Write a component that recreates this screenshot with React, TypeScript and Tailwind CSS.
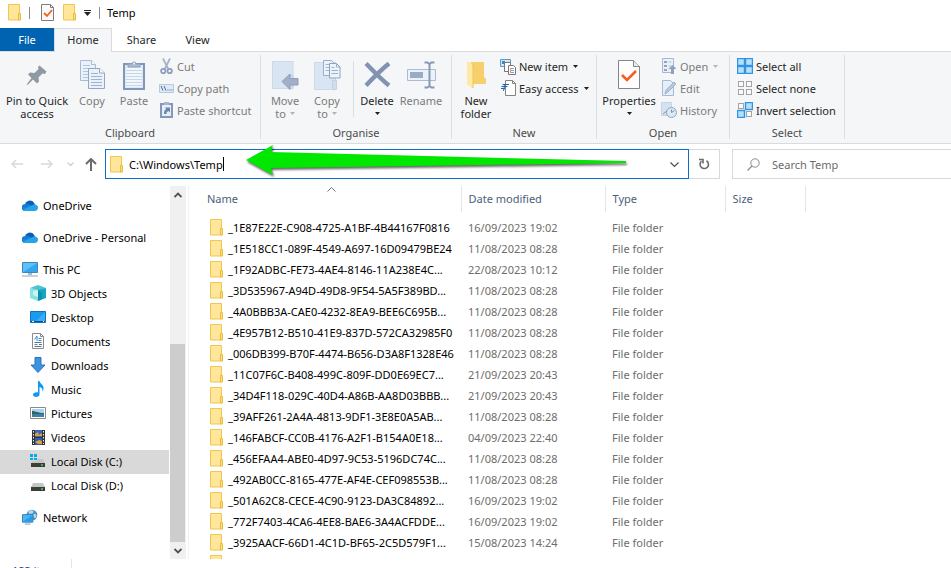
import type { ReactNode } from "react";

const FILES: [string, string][] = [
  ["_1E87E22E-C908-4725-A1BF-4B44167F0816", "16/09/2023 19:02"],
  ["_1E518CC1-089F-4549-A697-16D09479BE24", "11/08/2023 08:28"],
  ["_1F92ADBC-FE73-4AE4-8146-11A238E4C...", "22/08/2023 10:12"],
  ["_3D535967-A94D-49D8-9F54-5A5F389BD...", "11/08/2023 08:28"],
  ["_4A0BBB3A-CAE0-4232-8EA9-BEE6C695B...", "11/08/2023 08:28"],
  ["_4E957B12-B510-41E9-837D-572CA32985F0", "11/08/2023 08:28"],
  ["_006DB399-B70F-4474-B656-D3A8F1328E46", "11/08/2023 08:28"],
  ["_11C07F6C-B408-499C-809F-DD0E69EC7...", "21/09/2023 20:43"],
  ["_34D4F118-029C-40D4-A86B-AA8D03BBB...", "21/09/2023 20:43"],
  ["_39AFF261-2A4A-4813-9DF1-3E8E0A5AB...", "11/08/2023 08:28"],
  ["_146FABCF-CC0B-4176-A2F1-B154A0E18...", "04/09/2023 22:40"],
  ["_456EFAA4-ABE0-4D97-9C53-5196DC74C...", "11/08/2023 08:28"],
  ["_492AB0CC-8165-477E-AF4E-CEF098553B...", "11/08/2023 08:28"],
  ["_501A62C8-CECE-4C90-9123-DA3C84892...", "16/09/2023 19:02"],
  ["_772F7403-4CA6-4EE8-BAE6-3A4ACFDDE...", "16/09/2023 19:02"],
  ["_3925AACF-66D1-4C1D-BF65-2C5D579F1...", "15/08/2023 14:24"],
];

/* ---------- icons ---------- */

function FolderIcon() {
  return (
    <svg width="14" height="17" viewBox="0 0 14 17" className="shrink-0">
      <path d="M.5.5h11v15.500H.5z" fill="#ffe69b" stroke="#eec74e" />
      <path d="M10.500 9.500h2v6.500h-2z" fill="#ffdf83" stroke="#e9bd3c" />
    </svg>
  );
}

function CheckPage({ large }: { large?: boolean }) {
  return (
    <svg width={large ? 22 : 13} height={large ? 29 : 17} viewBox={large ? "0 0 22 29" : "0 0 13 17"} className="shrink-0">
      {large ? (
        <>
          <path d="M.5.5h15l6 6v22H.5z" fill="#fdfdfd" stroke="#858585" />
          <path d="M15.500.5v6h6" fill="#e9e9e9" stroke="#858585" />
          <path d="M4 15l5 5 9-9" fill="none" stroke="#f1601c" strokeWidth="2.600" />
        </>
      ) : (
        <>
          <path d="M.5.5h9l3 3v13H.5z" fill="#fafafa" stroke="#7c7c7c" />
          <path d="M9.500.5v3h3" fill="none" stroke="#7c7c7c" />
          <path d="M3 9l3 3 5-6" fill="none" stroke="#f1601c" strokeWidth="1.800" />
        </>
      )}
    </svg>
  );
}

const Pin = () => (
  <svg width="22" height="22" viewBox="0 0 22 22">
    <path d="M13.500 1.500l7 6-1.500 2.500-2.500-.5-4 4 .5 4-2 2-4-4-5.500 5.500-.7-.7L5.500 14l-3.500-3.500 2-2 4.500.5 4-4-.5-2z" fill="#8f99a3" />
  </svg>
);

function TwoPages() {
  return (
    <svg width="25" height="29" viewBox="0 0 25 29">
      <path d="M.5.5h11l4 4v16H.5z" fill="#eaf1fa" stroke="#a8b9d4" />
      <path d="M11.500.5v4h4" fill="#fff" stroke="#a8b9d4" />
      <path d="M3 5.500h7M3 8.500h10M3 11.500h10M3 14.500h10M3 17.500h10" stroke="#b4c5de" />
      <path d="M8.500 8.500h11l5 4.500v15.500h-16z" fill="#eaf1fa" stroke="#93a6c6" />
      <path d="M19.500 8.500v4.500h5" fill="#fff" stroke="#93a6c6" />
      <path d="M11 13.500h7M11 16.500h11M11 19.500h11M11 22.500h11M11 25.500h11" stroke="#9fb3d0" />
    </svg>
  );
}

const PasteIcon = () => (
  <svg width="22" height="30" viewBox="0 0 22 30">
    <path d="M1 4h20v25H1z" fill="#dbe8f7" stroke="#8296b8" strokeWidth="2" />
    <path d="M3 8h16v19H3z" fill="#f3f7fc" />
    <path d="M3 10.500h16M3 13.500h16M3 16.500h16M3 19.500h16M3 22.500h16M3 25.500h16" stroke="#c6d6ea" />
    <path d="M5 7V4h4a2 2 0 014 0h4v3z" fill="#a9bad3" stroke="#8da0be" />
    <circle cx="11" cy="3.500" r="1" fill="#eef3f9" />
  </svg>
);

const CutIcon = () => (
  <svg width="13" height="17" viewBox="0 0 13 17">
    <path d="M3 .5l5.500 11M10 .5L4.500 11.500" stroke="#a5b3c8" strokeWidth="1.800" />
    <circle cx="3.300" cy="13" r="2.200" fill="none" stroke="#8d9fbd" strokeWidth="1.800" />
    <circle cx="9.700" cy="13" r="2.200" fill="none" stroke="#8d9fbd" strokeWidth="1.800" />
  </svg>
);

const CopyPathIcon = () => (
  <svg width="15" height="9" viewBox="0 0 15 9">
    <path d="M.5.5h14v8H.5z" fill="#dfeaf6" stroke="#b7c9e0" />
    <path d="M2 2l2 4.500M5 2l2 4.500M8.500 6h1M10.500 6h1M12.500 6h1" stroke="#55688c" />
  </svg>
);

const PasteShortcutIcon = () => (
  <svg width="13" height="16" viewBox="0 0 13 16">
    <path d="M1 2h11v13H1z" fill="#e6eef8" stroke="#8597b9" strokeWidth="2" />
    <path d="M4 0h5v3H4z" fill="#a6b6d0" />
    <path d="M4 12c0-3 .5-4 2.200-5L5 5.500h5v5L8.600 9C7 9.500 6.500 10 6.500 12z" fill="#6f84aa" />
  </svg>
);

const MoveIcon = () => (
  <svg width="27" height="30" viewBox="0 0 27 30">
    <path d="M.5 1.500h20.500v27H.5z" fill="#dae5f3" stroke="#ccd9ea" />
    <path d="M16.500 15.500h4.500v13h-4.500z" fill="#d0ddee" stroke="#c3d1e4" />
    <path d="M10 21.500l8-7.500v4.500h8v6.500h-8v4.500z" fill="#a2afc8" stroke="#8e9dba" />
  </svg>
);

const CopyToIcon = () => (
  <svg width="27" height="32" viewBox="0 0 27 32">
    <path d="M.5 3.500h21v27H.5z" fill="#dae5f3" stroke="#ccd9ea" />
    <path d="M18.500 21.500h4v9h-4z" fill="#d0ddee" stroke="#c3d1e4" />
    <path d="M9.500 1.500h8l3 3v12h-11z" fill="#edf3fa" stroke="#9aadca" />
    <path d="M11.500 5.500h4M11.500 8.500h4M11.500 11.500h4" stroke="#a5b8d3" />
    <path d="M15.500 4.500h7l3.500 3.500v11h-10.500z" fill="#edf3fa" stroke="#8ea2c2" />
    <path d="M22.500 4.500V8h3.500M17.500 8.500h3M17.500 11.500h6.500M17.500 14.500h6.500" fill="none" stroke="#9db0cd" />
  </svg>
);

const DeleteIcon = () => (
  <svg width="27" height="27" viewBox="0 0 27 27">
    <path d="M2 2.500c7 7 14 15 23 22M25 2.500C17 9 9 17 2 24.500" stroke="#8293b2" strokeWidth="4.400" fill="none" />
  </svg>
);

const RenameIcon = () => (
  <svg width="29" height="28" viewBox="0 0 29 28">
    <path d="M.5 8.500h28v11H.5z" fill="#eaf2fb" stroke="#aabbd5" />
    <path d="M3 11h13v6H3z" fill="#9aabc6" />
    <path d="M17.500 1.500h3l2 1.500 2-1.500h3M22.500 2v24M17.500 26.500h3l2-1.500 2 1.500h3" stroke="#8798b8" strokeWidth="2" fill="none" />
  </svg>
);

const NewFolderIcon = () => (
  <svg width="19" height="28" viewBox="0 0 19 28">
    <path d="M5 1h12v15l2 2v5H5z" fill="#f8d06b" />
    <path d="M0 1h5l1 3v24L0 23z" fill="#ffe9a6" />
    <path d="M4.500 1.500L6 5v22" stroke="#edc65d" fill="none" />
  </svg>
);

const NewItemIcon = () => (
  <svg width="16" height="17" viewBox="0 0 16 17">
    <path d="M.5 1.500h10v7H.5z" fill="#cfe6f8" stroke="#5a9bc8" />
    <path d="M2 3h3v3H2z" fill="#3f85b8" />
    <path d="M4.500 4.500h6v9h-6z" fill="#fff" stroke="#777" />
    <path d="M8.500 7.500h5l2 2v7h-7z" fill="#fff" stroke="#777" />
    <path d="M10 10.500h4M10 12.500h4M10 14.500h4" stroke="#7ea7cf" />
    <path d="M10.500 10v5" stroke="#e89090" />
  </svg>
);

const EasyAccessIcon = () => (
  <svg width="15" height="16" viewBox="0 0 15 16">
    <path d="M4.500.5h7l3 3v12h-10z" fill="#fff" stroke="#848484" />
    <path d="M11.500.5v3h3" fill="none" stroke="#848484" />
    <path d="M1.500 4.500H8M.5 6.500h6M0 8.500h4" stroke="#2367ae" />
    <path d="M4 4L2.500 11" stroke="#2367ae" />
  </svg>
);

const OpenIcon = () => (
  <svg width="14" height="16" viewBox="0 0 14 16">
    <path d="M.5.5h11v14H.5z" fill="#eaf0f8" stroke="#a9b8ce" />
    <path d="M2 3h3v2H2zM2 7h3v2H2zM2 11h3v2H2z" fill="#92a4c2" />
    <path d="M6.500 4h3M6.500 8h3" stroke="#b3c1d6" />
    <path d="M10.500 7l4 4H12v5H9v-5H6.500z" fill="#8ea0be" />
  </svg>
);

const EditIcon = () => (
  <svg width="14" height="16" viewBox="0 0 14 16">
    <path d="M.5.5h8l3 3v12H.5z" fill="#e6eef8" stroke="#a9b9d1" />
    <path d="M3 14l1-4 8-8 2 2-8 8z" fill="#b8c8df" stroke="#8fa3c3" strokeWidth=".7" />
  </svg>
);

const HistoryIcon = () => (
  <svg width="16" height="16" viewBox="0 0 16 16">
    <path d="M.5.5h10v13H.5z" fill="#d6e2f1" stroke="#c5d3e6" />
    <circle cx="10.500" cy="10.500" r="5" fill="#dde8f5" stroke="#91a3c0" />
    <path d="M10.500 7.500v3l3-2M2 12l4-3" stroke="#7e92b4" fill="none" />
  </svg>
);

function GridIcon({ on }: { on: boolean[] }) {
  const spots: [number, number][] = [[0, 0], [8, 0], [0, 8], [8, 8]];
  return (
    <svg width="16" height="16" viewBox="0 0 16 16">
      {spots.map(([x, y], i) =>
        on[i] ? (
          <rect key={i} x={x + 0.5} y={y + 0.5} width="7" height="7" fill="#b5dffb" stroke="#2f93e4" strokeWidth="1.400" />
        ) : (
          <rect key={i} x={x + 1.5} y={y + 1.5} width="5" height="5" fill="#fafafa" stroke="#a3a3a3" />
        ),
      )}
    </svg>
  );
}

const Cloud = () => (
  <svg width="16" height="11" viewBox="0 0 16 11">
    <path d="M3 6a5 5 0 019.500-2.500L14 8H3z" fill="#0a5fb8" />
    <path d="M3.500 11a3.500 3.500 0 01-.5-7c2.500-.5 4.500.5 6.500 2l3 4z" fill="#147fd6" />
    <path d="M3.500 11c-1.300 0-2.200-.6-2.700-1.300L10 5.200c1-.9 2.400-1 3.300-.6C15 5 16 6.300 16 7.800 16 9.600 14.600 11 13 11z" fill="#28a3ea" />
  </svg>
);

const PcIcon = () => (
  <svg width="16" height="15" viewBox="0 0 16 15">
    <path d="M.5.5h15v10H.5z" fill="#5cc0fb" stroke="#3d88b8" />
    <path d="M1 10L15 1v9z" fill="#35a6ee" />
    <path d="M6 11h4v2H6z" fill="#a9bcc8" />
    <path d="M0 14h16" stroke="#8ea3b2" />
  </svg>
);

const CubeIcon = () => (
  <svg width="16" height="16" viewBox="0 0 16 16">
    <path d="M0 3l8-3 8 3-8 3z" fill="#4fc3ce" />
    <path d="M0 3l8 2v11l-8-3z" fill="#8ae2e2" />
    <path d="M8 5l8-2v10l-8 3z" fill="#17a7bd" />
    <path d="M3 6l5-1v7l-5-2z" fill="#c9f5f2" />
    <path d="M8 5l4 3v6l-4 2z" fill="#0c8fb0" />
  </svg>
);

const DesktopIcon = () => (
  <svg width="16" height="12" viewBox="0 0 16 12">
    <path d="M.5.5h15v11H.5z" fill="#1a9bf2" stroke="#1271b8" />
    <path d="M6 10L15 1v9z" fill="#39adf7" />
    <path d="M1 10.500h14" stroke="#0d4f86" />
    <path d="M2 10.500h2M13 10.500h1" stroke="#fff" />
  </svg>
);

const DocIcon = () => (
  <svg width="12" height="16" viewBox="0 0 12 16">
    <path d="M.5.5h8l3 3v12H.5z" fill="#fff" stroke="#8b8b8b" />
    <path d="M8.500.5v3h3" fill="none" stroke="#8b8b8b" />
    <path d="M2.500 9.500h7M7 11.500h3M2.500 13.500h7" stroke="#64727d" />
    <path d="M2.500 6.500L5 3v5M6.500 5.500h3M6.500 7.500h3M2.500 11.500h3" stroke="#2f8fd8" fill="none" />
  </svg>
);

const DownIcon = () => (
  <svg width="16" height="16" viewBox="0 0 16 16">
    <path d="M5 .5h6V8h4l-7 7.500L1 8h4z" fill="#3e92e0" stroke="#2c74ba" />
  </svg>
);

const MusicIcon = () => (
  <svg width="11" height="16" viewBox="0 0 11 16">
    <path d="M5 0h1.500c.5 3 4 3.500 4 7 0 2-.5 3-1 3.500.2-3-1-4-3-4.500v7.500C6.500 15 5 16 3 16S0 15 0 13.500 2 11 5 11.300z" fill="#0d99f5" />
  </svg>
);

const PictureIcon = () => (
  <svg width="16" height="12" viewBox="0 0 16 12">
    <path d="M.5.5h15v11H.5z" fill="#fff" stroke="#8a8a8a" />
    <path d="M2 2h12v4H2z" fill="#a6d3f2" />
    <path d="M2 4c3 0 6 2 12 2v2H2z" fill="#2f6658" />
    <path d="M2 7h12v3H2z" fill="#3d7fa8" />
  </svg>
);

const VideoIcon = () => (
  <svg width="13" height="15" viewBox="0 0 13 15">
    <path d="M0 0h13v15H0z" fill="#333" />
    <path d="M1.500 1v13M11.500 1v13" stroke="#eee" strokeDasharray="1.500 1.500" />
    <path d="M3 0h7v7H3z" fill="#3668c4" />
    <path d="M3 8h7v7H3z" fill="#2e5cb8" />
    <path d="M3 4l3-2 1 3 3-2v3H3zM3 12l4-2 3 1v3H6z" fill="#e0a33a" />
  </svg>
);

function DiskIcon({ windows }: { windows?: boolean }) {
  return (
    <svg width="16" height="14" viewBox="0 0 16 14">
      <path d="M3 5h10l2 4H1z" fill="#c6c6c6" />
      <path d="M1 9h14v4H1z" fill="#3d3d3d" />
      <path d="M11 11h2" stroke="#38e04c" strokeWidth="1.500" />
      {windows && (
        <>
          <path d="M0 0h7v7H0z" fill="#d9d9d9" />
          <path d="M0 0h3v3H0zM4 0h3v3H4zM0 4h3v2H0zM4 4h3v2H4z" fill="#00adef" />
        </>
      )}
    </svg>
  );
}

const NetworkIcon = () => (
  <svg width="16" height="16" viewBox="0 0 17 16">
    <circle cx="10.500" cy="6" r="5.800" fill="#4d93bf" />
    <path d="M7 2c2-2 6-1 5 1S8 5 7 4zM12 5c3-1 4 1 3 3s-3 1-3-3z" fill="#b5dcec" />
    <path d="M.5 5.500h11v8H.5z" fill="#4ab6f7" stroke="#2e7fb5" />
    <path d="M1 13l10-7v7z" fill="#2a9be8" />
    <path d="M3 15.500h6" stroke="#8199a8" />
  </svg>
);

const Caret = ({ dim }: { dim?: boolean }) => (
  <svg width="5" height="3" viewBox="0 0 5 3" className="inline-block">
    <path d="M0 0h5L2.500 3z" fill={dim ? "#b3b3b3" : "#1e1e1e"} />
  </svg>
);

/* ---------- ribbon ---------- */

function BigButton({ icon, lines, caret, dim, width }: { icon: ReactNode; lines: string[]; caret?: "below" | "inline"; dim?: boolean; width: string }) {
  return (
    <button className={`flex flex-col items-center ${width} ${dim ? "text-[#7b7b7b]" : "text-[#262626]"}`}>
      <span className="flex h-[39px] items-center justify-center">{icon}</span>
      {lines.map((line, i) => (
        <span key={line} className="flex items-center gap-1 leading-[13px] whitespace-nowrap">
          {line}
          {caret === "inline" && i === lines.length - 1 && <Caret dim={dim} />}
        </span>
      ))}
      {caret === "below" && (
        <span className="flex h-3 items-center"><Caret dim={dim} /></span>
      )}
    </button>
  );
}

function SmallButton({ icon, label, caret, dim }: { icon: ReactNode; label: string; caret?: boolean; dim?: boolean }) {
  return (
    <button className={`flex h-[22px] items-center gap-[3px] whitespace-nowrap ${dim ? "text-[#7b7b7b]" : "text-[#262626]"}`}>
      <span className="flex w-4 justify-center">{icon}</span>
      {label}
      {caret && <span className="flex pl-[2px]"><Caret dim={dim} /></span>}
    </button>
  );
}

function Group({ title, width, children }: { title: string; width: string; children: ReactNode }) {
  return (
    <section className={`flex shrink-0 flex-col border-r border-[#dcdfe2] ${width}`}>
      <div className="flex flex-1 items-start">{children}</div>
      <h2 className="text-center leading-[13px] text-[#4c4c4c]">{title}</h2>
    </section>
  );
}

function Ribbon() {
  return (
    <div className="flex h-[92px] shrink-0 border-b border-[#d9dbde] bg-[#f5f6f7] pt-[3px] pb-1">
      <Group title="Clipboard" width="w-[261px]">
        <BigButton width="w-[74px]" icon={<Pin />} lines={["Pin to Quick", "access"]} />
        <BigButton width="w-9" icon={<TwoPages />} lines={["Copy"]} dim />
        <BigButton width="w-12" icon={<PasteIcon />} lines={["Paste"]} dim />
        <div className="flex flex-col">
          <SmallButton icon={<CutIcon />} label="Cut" dim />
          <SmallButton icon={<CopyPathIcon />} label="Copy path" dim />
          <SmallButton icon={<PasteShortcutIcon />} label="Paste shortcut" dim />
        </div>
      </Group>
      <Group title="Organise" width="w-[191px]">
        <BigButton width="w-12" icon={<MoveIcon />} lines={["Move", "to"]} caret="inline" dim />
        <BigButton width="w-9" icon={<CopyToIcon />} lines={["Copy", "to"]} caret="inline" dim />
        <div className="mt-[6px] ml-2 h-14 w-px bg-[#dcdfe2]" />
        <BigButton width="w-[46px]" icon={<DeleteIcon />} lines={["Delete"]} caret="below" />
        <BigButton width="w-[42px]" icon={<RenameIcon />} lines={["Rename"]} dim />
      </Group>
      <Group title="New" width="w-[145px]">
        <BigButton width="w-12" icon={<NewFolderIcon />} lines={["New", "folder"]} />
        <div className="flex flex-col">
          <SmallButton icon={<NewItemIcon />} label="New item" caret />
          <SmallButton icon={<EasyAccessIcon />} label="Easy access" caret />
        </div>
      </Group>
      <Group title="Open" width="w-[133px]">
        <BigButton width="w-16" icon={<CheckPage large />} lines={["Properties"]} caret="below" />
        <div className="flex flex-col">
          <SmallButton icon={<OpenIcon />} label="Open" caret dim />
          <SmallButton icon={<EditIcon />} label="Edit" dim />
          <SmallButton icon={<HistoryIcon />} label="History" dim />
        </div>
      </Group>
      <Group title="Select" width="w-[115px]">
        <div className="flex flex-col pl-[7px]">
          <SmallButton icon={<GridIcon on={[true, true, true, true]} />} label="Select all" />
          <SmallButton icon={<GridIcon on={[false, false, false, false]} />} label="Select none" />
          <SmallButton icon={<GridIcon on={[false, true, true, false]} />} label="Invert selection" />
        </div>
      </Group>
    </div>
  );
}

/* ---------- address row ---------- */

function Arrow({ left, color }: { left?: boolean; color: string }) {
  return (
    <svg width="12" height="10" viewBox="0 0 12 10">
      <path d={left ? "M5 1L1 5l4 4M1 5h11" : "M7 1l4 4-4 4M11 5H0"} fill="none" stroke={color} strokeWidth="1.500" />
    </svg>
  );
}

function AddressRow() {
  return (
    <div className="relative flex h-[42px] shrink-0 items-center pb-[2px]">
      <nav className="flex w-[105px] shrink-0 items-center pl-[11px]">
        <button aria-label="Back" className="flex w-[30px]"><Arrow left color="#d9d9d9" /></button>
        <button aria-label="Forward" className="flex w-[26px]"><Arrow color="#d9d9d9" /></button>
        <button aria-label="Recent locations" className="flex w-[18px]">
          <svg width="7" height="5" viewBox="0 0 7 5"><path d="M.5.5l3 3 3-3" fill="none" stroke="#cfcfcf" strokeWidth="1.300" /></svg>
        </button>
        <button aria-label="Up" className="flex">
          <svg width="12" height="13" viewBox="0 0 12 13"><path d="M1 6l5-5 5 5M6 1v12" fill="none" stroke="#6b6b6b" strokeWidth="2" /></svg>
        </button>
      </nav>
      <div className="flex h-[30px] w-[584px] items-center border border-[#0b6fc7] bg-white pr-2 pl-1">
        <FolderIcon />
        <label className="ml-[5px] flex min-w-0 flex-1 items-center">
          <span className="sr-only">Address</span>
          <input readOnly value="C:\Windows\Temp" className="h-5 max-w-full bg-transparent text-black outline-none [field-sizing:content]" />
          <span className="h-[14px] w-px bg-black" />
        </label>
        <button aria-label="Previous locations">
          <svg width="11" height="7" viewBox="0 0 11 7"><path d="M1.500 1.500l4 4 4-4" fill="none" stroke="#4d4d4d" strokeWidth="1.200" /></svg>
        </button>
      </div>
      <button aria-label="Refresh" className="flex h-[30px] w-[31px] shrink-0 items-center justify-center border border-l-0 border-[#d9d9d9]">
        <svg width="12" height="12" viewBox="0 0 12 12">
          <path d="M3.500 3.200A4.200 4.200 0 108.500 2.800M1 1.500h4v4" fill="none" stroke="#6b6b6b" strokeWidth="1.600" />
        </svg>
      </button>
      <div className="ml-3 flex h-[30px] min-w-[219px] flex-1 items-center border border-r-0 border-[#d9d9d9] pl-[14px]">
        <svg width="13" height="13" viewBox="0 0 13 13">
          <circle cx="8" cy="5" r="4.200" fill="none" stroke="#8b8b8b" />
          <path d="M5 8l-4.500 4.500" stroke="#8b8b8b" strokeWidth="1.200" />
        </svg>
        <input aria-label="Search Temp" placeholder="Search Temp" className="ml-3 h-5 w-40 bg-transparent outline-none placeholder:text-[#6b6b6b]" />
      </div>
      <svg width="392" height="44" viewBox="0 0 392 44" className="pointer-events-none absolute top-0 left-[241px] drop-shadow-[1px_2px_1px_rgba(0,0,0,0.6)]">
        <path d="M5 16L32 1l-2 7 355 9v2L30 24l2 7z" fill="#00e800" />
      </svg>
    </div>
  );
}

/* ---------- body ---------- */

function NavItem({ icon, label, child, selected }: { icon: ReactNode; label: string; child?: boolean; selected?: boolean }) {
  return (
    <li>
      <a href="#" className={`flex h-6 w-[169px] items-center gap-[5px] pb-[2px] ${child ? "pl-[30px]" : "pl-[22px]"} ${selected ? "bg-[#d9d9d9]" : ""}`}>
        <span className="flex w-4 justify-center">{icon}</span>
        {label}
      </a>
    </li>
  );
}

function Sidebar() {
  return (
    <aside className="flex w-[189px] shrink-0 border-r border-[#f0f0f0]">
      <nav className="flex w-[170px] flex-col gap-2 pt-2 text-black">
        <ul><NavItem icon={<Cloud />} label="OneDrive" /></ul>
        <ul><NavItem icon={<Cloud />} label="OneDrive - Personal" /></ul>
        <ul>
          <NavItem icon={<PcIcon />} label="This PC" />
          <NavItem child icon={<CubeIcon />} label="3D Objects" />
          <NavItem child icon={<DesktopIcon />} label="Desktop" />
          <NavItem child icon={<DocIcon />} label="Documents" />
          <NavItem child icon={<DownIcon />} label="Downloads" />
          <NavItem child icon={<MusicIcon />} label="Music" />
          <NavItem child icon={<PictureIcon />} label="Pictures" />
          <NavItem child icon={<VideoIcon />} label="Videos" />
          <NavItem child selected icon={<DiskIcon windows />} label="Local Disk (C:)" />
          <NavItem child icon={<DiskIcon />} label="Local Disk (D:)" />
        </ul>
        <ul><NavItem icon={<NetworkIcon />} label="Network" /></ul>
      </nav>
      <div className="flex w-4 flex-col items-center bg-[#f0f0f0]">
        <button aria-label="Scroll up" className="flex h-[17px] items-center">
          <svg width="8" height="6" viewBox="0 0 8 6"><path d="M.5 5L4 1.500 7.500 5" fill="none" stroke="#505050" strokeWidth="1.800" /></svg>
        </button>
        <div className="flex-[141]" />
        <div className="mr-px w-[15px] flex-[198] bg-[#cdcdcd]" />
        <button aria-label="Scroll down" className="flex h-[17px] items-center">
          <svg width="8" height="6" viewBox="0 0 8 6"><path d="M.5 1L4 4.500 7.500 1" fill="none" stroke="#505050" strokeWidth="1.800" /></svg>
        </button>
      </div>
    </aside>
  );
}

function FileTable() {
  return (
    <div className="min-w-0 flex-1 overflow-hidden pl-[11px]">
      <table className="table-fixed border-collapse text-left">
        <colgroup>
          <col className="w-[261px]" />
          <col className="w-36" />
          <col className="w-[120px]" />
          <col className="w-20" />
        </colgroup>
        <thead className="text-[#4c607a]">
          <tr className="h-[26px]">
            <th className="relative border-r border-[#e5e5e5] p-0 pb-[2px] pl-[7px] font-normal">
              Name
              <svg width="9" height="5" viewBox="0 0 9 5" className="absolute top-px left-[127px]"><path d="M.5 4.500l4-4 4 4" fill="none" stroke="#707070" /></svg>
            </th>
            <th className="border-r border-[#e5e5e5] p-0 pb-[2px] pl-[7px] font-normal">Date modified</th>
            <th className="border-r border-[#e5e5e5] p-0 pb-[2px] pl-[7px] font-normal">Type</th>
            <th className="border-r border-[#e5e5e5] p-0 pb-[2px] pl-[7px] font-normal">Size</th>
          </tr>
          <tr className="h-[5px]" />
        </thead>
        <tbody className="text-[#6d6d6d]">
          {FILES.map(([name, date]) => (
            <tr key={name} className="h-[21px]">
              <td className="p-0 pl-[10px] text-black">
                <span className="flex items-center gap-1 whitespace-nowrap"><FolderIcon />{name}</span>
              </td>
              <td className="p-0 pl-[7px] whitespace-nowrap">{date}</td>
              <td className="p-0 pl-[7px]">File folder</td>
              <td />
            </tr>
          ))}
          <tr className="h-[21px]">
            <td className="p-0 pl-[10px]"><FolderIcon /></td>
            <td /><td /><td />
          </tr>
        </tbody>
      </table>
    </div>
  );
}

export default function App() {
  return (
    <div className="flex h-screen flex-col overflow-hidden bg-white font-['Noto_Sans','Open_Sans',sans-serif] text-[11px] leading-[15px] text-[#262626]">
      <header className="flex h-7 shrink-0 items-center pb-[3px] pl-2">
        <FolderIcon />
        <span className="ml-[7px] h-3 w-px bg-[#8c8c8c]" />
        <button aria-label="Properties" className="ml-[11px]"><CheckPage /></button>
        <button aria-label="New folder" className="ml-[9px]"><FolderIcon /></button>
        <button aria-label="Customise toolbar" className="ml-[7px]">
          <svg width="7" height="6" viewBox="0 0 7 6"><path d="M0 .5h7" stroke="#222" /><path d="M0 2h7L3.500 6z" fill="#222" /></svg>
        </button>
        <span className="ml-2 h-3 w-px bg-[#8c8c8c]" />
        <h1 className="ml-[7px] text-black">Temp</h1>
      </header>
      <div className="flex h-6 shrink-0 border-b border-[#d9dbde] text-center">
        <button className="h-[23px] w-[54px] bg-[#0063b1] text-white">File</button>
        <button className="h-6 w-[58px] border border-b-0 border-[#d9dbde] bg-[#f5f6f7] pb-[2px]">Home</button>
        <button className="w-[59px]">Share</button>
        <button className="w-[53px]">View</button>
      </div>
      <Ribbon />
      <AddressRow />
      <main className="flex min-h-0 flex-1">
        <Sidebar />
        <FileTable />
      </main>
      <footer className="flex h-[9px] shrink-0 overflow-hidden pl-3 text-[#1d3c6e]">
        <span className="h-[18px] w-[60px] border-r border-[#e5e5e5] pt-1 whitespace-nowrap">183 items</span>
      </footer>
    </div>
  );
}
